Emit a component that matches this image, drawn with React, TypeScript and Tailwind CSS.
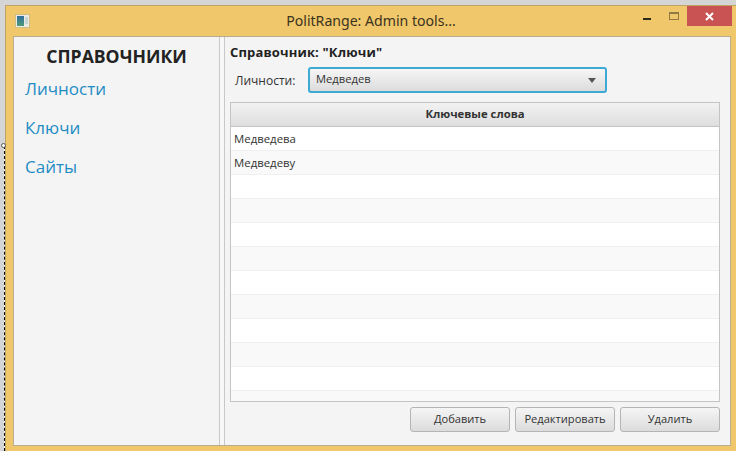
const rows = ["Медведева", "Медведеву", "", "", "", "", "", "", "", "", "", ""];
const links = ["Личности", "Ключи", "Сайты"];
const actions = ["Добавить", "Редактировать", "Удалить"];

const AppIcon = () => (
  <svg width="15" height="14" viewBox="0 0 15 14" className="-mt-[1px] shrink-0">
    <defs>
      <linearGradient id="app-icon-fill" x1="0" y1="0" x2="0" y2="1">
        <stop offset="0" stopColor="#2f6f9f" />
        <stop offset="1" stopColor="#4f9a78" />
      </linearGradient>
    </defs>
    <rect x="0.5" y="0.5" width="14" height="13" fill="#eeece2" stroke="#cfbd88" />
    <rect x="2" y="2" width="7" height="10" fill="url(#app-icon-fill)" />
    <rect x="10" y="3" width="3" height="7" fill="#c9d6d6" />
  </svg>
);

const App = () => (
  <div className="relative h-[451px] w-[736px] overflow-hidden bg-[#d5d5d5] pl-[5px] pt-[5px] font-['Open_Sans','Noto_Sans',sans-serif] text-[#333]">
    {/* selection handle left behind the window */}
    <div className="absolute left-[4px] top-[146px] bottom-0 w-px border-l border-dashed border-black bg-white" />
    <div className="absolute left-[1px] top-[143px] h-[5px] w-[5px] rounded-full border border-[#555] bg-white" />

    <div className="flex h-[446px] w-[731px] flex-col border-l border-t border-[#bda564] bg-[#f0c76a]">
      <div className="relative flex h-[30px] shrink-0 items-center pl-[9px]">
        <AppIcon />
        <div className="absolute inset-x-0 top-[5px] text-center font-['Noto_Sans',sans-serif] text-[14.1px] leading-[20px] text-[#3a3320]">
          PolitRange: Admin tools...
        </div>
        <div className="absolute right-[4px] top-0 flex items-start">
          <div className="mr-[18px] mt-[12px] h-[2px] w-[8px] bg-[#2f2a1c]" />
          <div className="mr-[8px] mt-[6px] h-[8px] w-[10px] border border-t-2 border-[#8f7a43]" />
          <div className="flex h-[20px] w-[45px] items-center justify-center bg-[#c95353]">
            <svg width="9" height="9" viewBox="0 0 9 9">
              <path d="M1 1l7 7M8 1L1 8" stroke="#fff" strokeWidth="2" />
            </svg>
          </div>
        </div>
      </div>

      <div className="ml-[7px] mr-[5px] mb-[5px] flex min-h-0 flex-1 border border-[#b8ad90] bg-[#f4f4f4]">
        <aside className="flex w-[205px] shrink-0 flex-col px-[10px]">
          <h1 className="mt-[6px] text-center text-[17.6px] leading-[26px] font-bold text-[#222]">СПРАВОЧНИКИ</h1>
          <nav className="mt-[7px] flex flex-col gap-[13px] pl-[1px]">
            {links.map((link) => (
              <a key={link} className="text-[17px] leading-[26px] text-[#1f8cc4]">{link}</a>
            ))}
          </nav>
        </aside>

        <div className="w-[6px] shrink-0 border-x border-[#c8c8c8] bg-[#f7f7f7]" />

        <main className="flex min-w-0 flex-1 flex-col pl-[5px] pr-[10px]">
          <h2 className="mt-[6px] text-[13px] leading-[18px] font-bold tracking-[0.15px] text-[#222]">Справочник: "Ключи"</h2>
          <div className="mt-[6px] flex h-[26px] items-center">
            <span className="ml-[5px] mt-[2px] w-[73px] text-[12px] text-[#333]">Личности:</span>
            <div className="flex h-[26px] w-[299px] items-center justify-between rounded-[3px] border-2 border-[#3fa9d6] bg-linear-to-b from-[#f6f6f6] to-[#dcdcdc] pl-[6px] pr-[9px] text-[11.2px] text-[#333]">
              <span className="-mt-[1px]">Медведев</span>
              <span className="h-0 w-0 border-x-[4.5px] border-t-[5px] border-x-transparent border-t-[#555]" />
            </div>
          </div>

          <div className="mt-[9px] flex h-[300px] flex-col overflow-hidden border border-[#c4c4c4] bg-white">
            <div className="flex h-[24px] shrink-0 items-center justify-center border-b border-[#c4c4c4] bg-linear-to-b from-[#f2f2f2] to-[#dedede] text-[11.3px] font-bold text-[#333]">
              Ключевые слова
            </div>
            {rows.map((row, i) => (
              <div key={i} className={`flex h-[24px] shrink-0 items-center border-b border-[#f0f0f0] pl-[3px] text-[11.4px] text-[#333] ${i % 2 ? "bg-[#f9f9f9]" : "bg-white"}`}>
                {row}
              </div>
            ))}
          </div>

          <div className="mt-[5px] flex justify-end gap-[5px]">
            {actions.map((action) => (
              <button key={action} className="h-[25px] w-[100px] rounded-[3px] border border-[#b5b5b5] bg-linear-to-b from-[#f5f5f5] to-[#dcdcdc] text-[11.1px] text-[#333]">
                {action}
              </button>
            ))}
          </div>
        </main>
      </div>
    </div>
  </div>
);

export default App;
